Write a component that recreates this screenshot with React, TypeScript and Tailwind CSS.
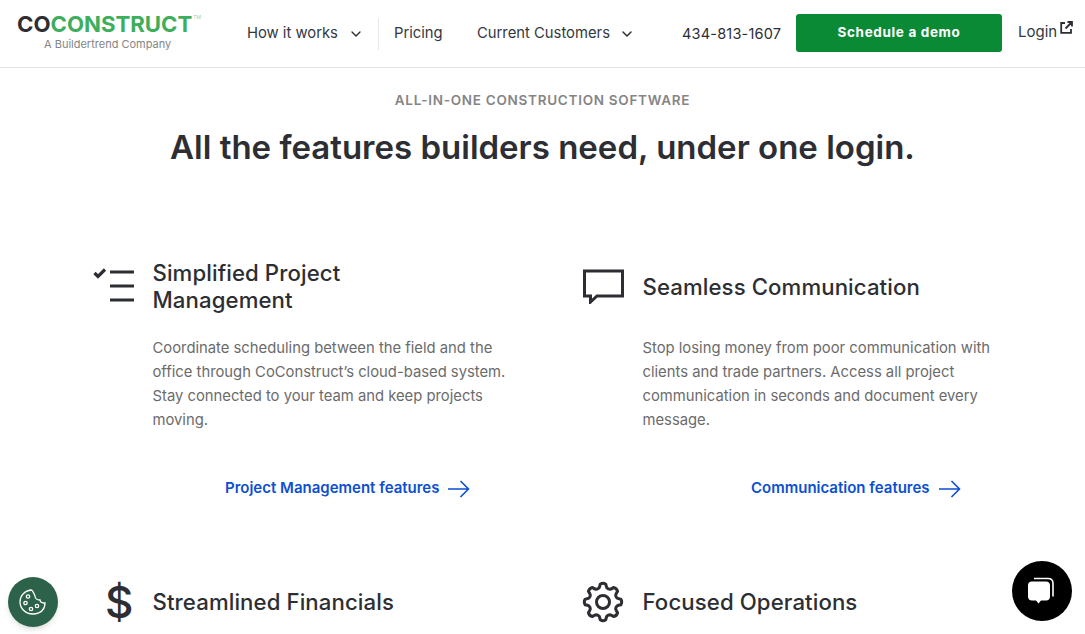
import React from "react";
import { ChevronDown } from "lucide-react";

const font = { fontFamily: "Inter" };

function gearPath() {
  const cx = 21, cy = 21, teeth = 8, ro = 19, ri = 14.5;
  const step = (Math.PI * 2) / teeth;
  let d = "";
  for (let i = 0; i < teeth; i++) {
    const a = i * step - Math.PI / 2;
    const pt = (r: number, off: number) => `${(cx + r * Math.cos(a + off)).toFixed(2)} ${(cy + r * Math.sin(a + off)).toFixed(2)}`;
    d += `${i === 0 ? "M" : "L"}${pt(ri, -step * 0.36)} Q${pt(ri + 1, -step * 0.27)} ${pt(ro - 1, -step * 0.2)} Q${pt(ro + 0.6, 0)} ${pt(ro - 1, step * 0.2)} Q${pt(ri + 1, step * 0.27)} ${pt(ri, step * 0.36)} `;
    const mid = a + step / 2;
    d += `Q${(cx + (ri - 0.8) * Math.cos(mid)).toFixed(2)} ${(cy + (ri - 0.8) * Math.sin(mid)).toFixed(2)} `;
    d += `${(cx + ri * Math.cos(a + step * 0.64)).toFixed(2)} ${(cy + ri * Math.sin(a + step * 0.64)).toFixed(2)} `;
  }
  return d + "Z";
}

function Feature({ icon, title, body, link, linkIndent }: { icon: React.ReactNode; title: React.ReactNode; body?: React.ReactNode; link?: string; linkIndent?: string }) {
  return (
    <div className="flex flex-col">
      <div className="flex items-center min-h-[54px]">
        <div className="w-[60.500px] shrink-0">{icon}</div>
        <h3 className="text-[22.2px] leading-[27px] font-medium text-[#2d2e33] tracking-[0.1px]">{title}</h3>
      </div>
      {body && <p className="mt-[23px] ml-[60.500px] w-[358px] text-[14.8px] leading-6 text-[#6b6b6b]">{body}</p>}
      {link && (
        <a className={`mt-[45px] flex items-center gap-[9px] text-[#0d4fd1] text-[15px] font-semibold ${linkIndent}`}>
          {link}
          <svg width="22" height="18" viewBox="0 0 22 18" fill="none" stroke="#0d4fd1" strokeWidth="1.6" className="mt-[2px]"><path d="M0 9h20.500M12.500 1l8 8-8 8" /></svg>
        </a>
      )}
    </div>
  );
}

export default function App() {
  return (
    <div className="h-[634px] w-[1085px] overflow-hidden bg-white relative" style={font}>
      <header className="h-[68px] border-b border-[#e5e5e5] flex items-center">
        <div className="w-[247px] pl-[17px] shrink-0 flex flex-col -mt-[4px]">
          <div className="text-[22.2px] leading-[22px] font-bold flex items-start">
            <span className="text-[#2d2e33]">CO</span><span className="text-[#3cae5c]">CONSTRUCT</span>
            <span className="text-[5px] leading-[8px] ml-[1px] font-normal text-[#9bd0a9]">TM</span>
          </div>
          <div className="text-[11px] leading-[14px] mt-[2px] ml-[27px] text-[#858585]">A Buildertrend Company</div>
        </div>
        <nav className="flex items-center text-[14.8px] text-[#33383f] whitespace-nowrap">
          <span className="w-[101px]">How it works</span>
          <ChevronDown size={16} strokeWidth={2} className="text-[#2d2e33]" />
          <span className="ml-[14px] w-px h-[32px] bg-[#e8e8e8]" />
          <span className="ml-[15px] w-[83px]">Pricing</span>
          <span className="w-[142px]">Current Customers</span>
          <ChevronDown size={16} strokeWidth={2.2} className="text-[#2d2e33]" />
        </nav>
        <span className="ml-[47px] w-[114px] text-[14.5px] tracking-[0.2px] text-[#2d2e33] whitespace-nowrap">434-813-1607</span>
        <a className="w-[206px] h-[38px] -mt-[2px] rounded-[3px] bg-[#0b8a36] text-white font-bold text-[13.5px] tracking-[0.65px] flex items-center justify-center">Schedule a demo</a>
        <span className="ml-[16px] -mt-[2px] text-[15px] text-[#33383f]">Login</span>
        <svg width="13" height="13" viewBox="0 0 13 13" fill="none" stroke="#2d2e33" strokeWidth="1.8" className="ml-[3px] -mt-[12px]">
          <path d="M5 2H1.200v9.800H11V8M7.500 1h4.500v4.500M12 1L5.500 7.500" />
        </svg>
      </header>
      <main>
        <p className="mt-[23px] text-center text-[13.5px] leading-[18px] font-semibold tracking-[0.72px] text-[#858585]">ALL-IN-ONE CONSTRUCTION SOFTWARE</p>
        <h1 className="mt-[17px] text-center text-[33px] leading-[42px] font-semibold text-[#2d2e33]">All the features builders need, under one login.</h1>
        <div className="mt-[91px] pl-[92px] grid grid-cols-[490px_1fr]">
          <Feature
            icon={
              <svg width="42" height="38" viewBox="0 0 42 38" fill="none" stroke="#2d2e33" strokeWidth="2.8" className="ml-[1px]">
                <path d="M1.500 6l3.500 3.500L12 2.500" strokeWidth="3.200" />
                <path d="M17 5h24M17 19h24M17 33h24" />
              </svg>
            }
            title={<>Simplified Project<br />Management</>}
            body="Coordinate scheduling between the field and the office through CoConstruct’s cloud-based system. Stay connected to your team and keep projects moving."
            link="Project Management features"
            linkIndent="ml-[133px]"
          />
          <Feature
            icon={
              <svg width="41" height="35" viewBox="0 0 41 35" fill="none" stroke="#2d2e33" strokeWidth="3" className="ml-[1px]">
                <path d="M1.500 2h38v25H14l-6.500 6v-6h-6z" />
              </svg>
            }
            title="Seamless Communication"
            body="Stop losing money from poor communication with clients and trade partners. Access all project communication in seconds and document every message."
            link="Communication features"
            linkIndent="ml-[169px]"
          />
        </div>
        <div className="mt-[75px] pl-[92px] grid grid-cols-[490px_1fr]">
          <Feature
            icon={<span className="block ml-[13px] text-[44px] leading-[44px] font-medium text-[#2d2e33]">$</span>}
            title="Streamlined Financials"
          />
          <Feature
            icon={
              <svg width="42" height="42" viewBox="0 0 42 42" fill="none" stroke="#2d2e33" strokeWidth="3" strokeLinejoin="round">
                <path d={gearPath()} />
                <circle cx="21" cy="21" r="6.500" />
              </svg>
            }
            title="Focused Operations"
          />
        </div>
      </main>
      <div className="absolute left-[8px] top-[577px] w-[50px] h-[50px] rounded-full bg-[#2b6249] shadow-md flex items-center justify-center">
        <svg width="34" height="34" viewBox="0 0 34 34" fill="none" stroke="white" strokeWidth="1.3">
          <path d="M15 5c-7 1-11 6-11 12s5 12 13 12 12-5 12-11c-3 0-5-1-5-3-3 0-5-2-5-4-1-2-2-6-4-6z" />
          <circle cx="12" cy="11.500" r="1.700" /><circle cx="9.500" cy="18" r="1.700" /><circle cx="15" cy="24" r="1.700" /><circle cx="21" cy="21" r="1.700" />
        </svg>
      </div>
      <div className="absolute left-[1012px] top-[561px] w-[60px] h-[60px] rounded-full bg-black flex items-center justify-center">
        <svg width="32" height="32" viewBox="0 0 32 32">
          <path d="M8 3.500h14c3 0 5 2 5 5v13" fill="none" stroke="white" strokeWidth="1.600" />
          <path d="M6 6.500h14c2.500 0 4 1.500 4 4v11c0 2.500-1.500 4-4 4h-5l-2.500 3-2.500-3H6c-2.500 0-4-1.500-4-4v-11c0-2.500 1.500-4 4-4z" fill="white" />
        </svg>
      </div>
    </div>
  );
}
